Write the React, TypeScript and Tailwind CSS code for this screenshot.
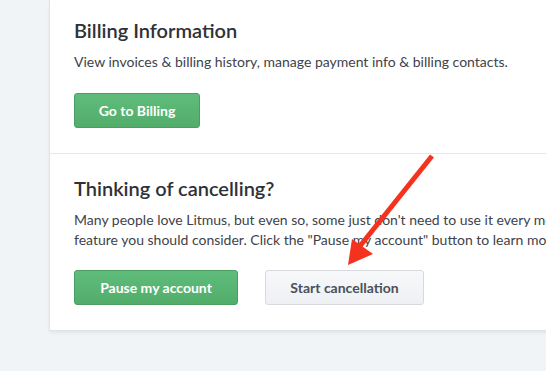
import React from 'react'

export default function App() {
    return (
        <div
            className="relative w-[546px] h-[371px] overflow-hidden bg-[#f1f4f7]"
            style={{ fontFamily: 'Lato, "Open Sans", Arial, sans-serif' }}
        >
            <div className="ml-[49px] w-[720px] bg-white border-l border-b border-[#dfe3e8] shadow-[0_2px_3px_rgba(0,0,0,0.06)]">
                {/* billing */}
                <div className="px-[24px] pt-[18px] pb-[25px]">
                    <h2 className="text-[20px] leading-[24px] font-semibold text-[#2e3137]">Billing Information</h2>
                    <p className="mt-[10px] text-[14px] leading-[20px] text-[#3e424a]">
                        View invoices &amp; billing history, manage payment info &amp; billing contacts.
                    </p>
                    <button className="mt-[21px] w-[126px] h-[35px] rounded-[3px] border border-[#4a9f60] bg-gradient-to-b from-[#5fbc7a] to-[#52ad6b] text-white text-[14px] font-bold">
                        Go to Billing
                    </button>
                </div>

                <div className="border-t border-[#e3e6ea]" />

                {/* cancel */}
                <div className="px-[24px] pt-[22px] pb-[25px]">
                    <h2 className="text-[20px] leading-[24px] font-semibold text-[#2e3137]">Thinking of cancelling?</h2>
                    <p className="mt-[10px] text-[14px] leading-[20px] text-[#3e424a] whitespace-nowrap">
                        Many people love Litmus, but even so, some just don't need to use it every month. If that's you, there's a pause
                        <br />
                        feature you should consider. Click the "Pause my account" button to learn more.
                    </p>
                    <div className="mt-[20px] flex gap-[27px]">
                        <button className="w-[164px] h-[35px] rounded-[3px] border border-[#4a9f60] bg-gradient-to-b from-[#5fbc7a] to-[#52ad6b] text-white text-[14px] font-bold">
                            Pause my account
                        </button>
                        <button className="w-[159px] h-[35px] rounded-[3px] border border-[#d6d9de] bg-gradient-to-b from-[#f7f8fa] to-[#eef0f3] text-[#4b5058] text-[14px] font-bold">
                            Start cancellation
                        </button>
                    </div>
                </div>
            </div>

            {/* annotation arrow */}
            <svg className="absolute left-0 top-0 pointer-events-none" width="546" height="371">
                <line x1="432" y1="156" x2="360" y2="246" stroke="#f5321e" strokeWidth="5" />
                <polygon points="348,265 352,239 373,254" fill="#f5321e" />
            </svg>
        </div>
    )
}
